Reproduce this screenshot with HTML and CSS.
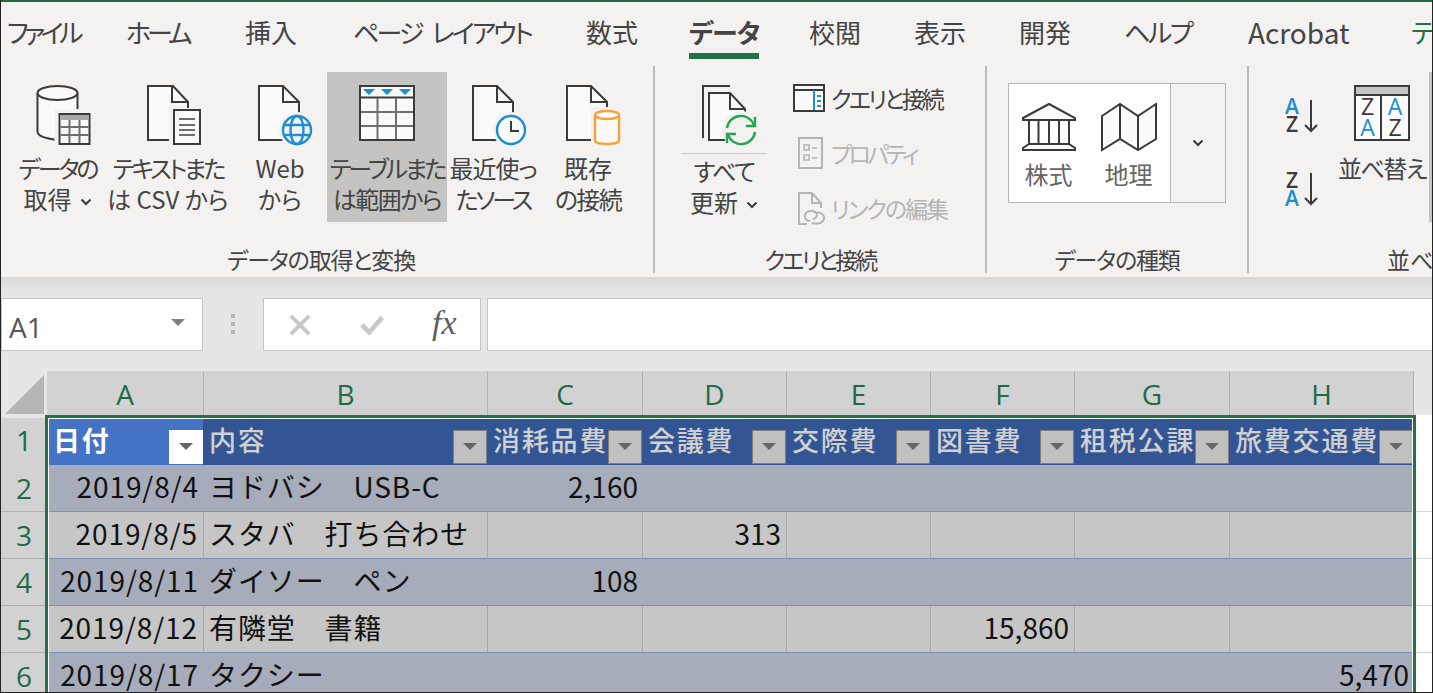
FILE: index.html
```html
<!DOCTYPE html>
<html lang="ja">
<head>
<meta charset="utf-8">
<title>Excel データ</title>
<link rel="stylesheet" href="styles.css">
</head>
<body>
<div class="app">
  <header class="ribbon">
    <nav class="tabs">
      <span class="tab t1">ファイル</span>
      <span class="tab t2">ホーム</span>
      <span class="tab t3">挿入</span>
      <span class="tab t4">ページ レイアウト</span>
      <span class="tab t5">数式</span>
      <span class="tab t6 active">データ</span>
      <span class="tab t7">校閲</span>
      <span class="tab t8">表示</span>
      <span class="tab t9">開発</span>
      <span class="tab t10">ヘルプ</span>
      <span class="tab t11">Acrobat</span>
      <span class="tab t12 context">テーブル デザイン</span>
    </nav>
    <div class="groups">
      <section class="group g1">
        <div class="group-body">
          <div class="big b1">
            <svg class="icon" viewBox="17.5 80 80 70"><g fill="#fafafa" stroke="#3b3a39" stroke-width="2"><path d="M37 93V132Q38 138 58 140H77V93"/><ellipse cx="57" cy="93" rx="20" ry="7"/></g><rect x="54" y="109" width="40" height="38" fill="#f3f2f1"/><rect x="59" y="114" width="30" height="30" fill="#fafafa" stroke="#3b3a39" stroke-width="2"/><rect x="60" y="115" width="28" height="5" fill="#a9a9a9"/><path d="M60 127H88M60 135H88M69 120V143M79 120V143" stroke="#6e6e6e" stroke-width="2" fill="none"/></svg>
            <div class="big-label"><span class="k3">データの</span><br>取得<svg class="chev" viewBox="0 0 12 8"><path d="M1.5 1.5L6 6L10.5 1.5"/></svg></div>
          </div>
          <div class="big b2">
            <svg class="icon" viewBox="128 80 80 70"><path d="M173 86H148V140H188V102Z" fill="#fafafa" stroke="#3b3a39" stroke-width="2"/><path d="M172 86V102H188" fill="none" stroke="#3b3a39" stroke-width="2"/><rect x="169" y="105" width="35" height="40" fill="#f3f2f1"/><path d="M188 102V108" stroke="#3b3a39" stroke-width="2"/><rect x="174" y="110" width="26" height="34" fill="#fafafa" stroke="#3b3a39" stroke-width="2"/><path d="M179 119H195M179 125H195M179 130H195M179 135H195" stroke="#6e6e6e" stroke-width="2"/></svg>
            <div class="big-label"><span class="k3">テキストまた</span><br>は CSV から</div>
          </div>
          <div class="big b3">
            <svg class="icon" viewBox="240 80 80 70"><path d="M283 86H259V140H299V102Z" fill="#fafafa" stroke="#3b3a39" stroke-width="2"/><path d="M283 86V102H299" fill="none" stroke="#3b3a39" stroke-width="2"/><circle cx="297" cy="130" r="18" fill="#f3f2f1"/><g fill="none" stroke="#1e8ed2" stroke-width="2.4"><circle cx="297" cy="130" r="14"/><ellipse cx="297" cy="130" rx="6.5" ry="14"/><path d="M284 125H310M284 135H310"/></g></svg>
            <div class="big-label">Web<br>から</div>
          </div>
          <div class="big b4 selected">
            <svg class="icon" viewBox="347 80 80 70"><rect x="360" y="86" width="54" height="54" fill="#fafafa" stroke="#3b3a39" stroke-width="2"/><path d="M361 97.500H413" stroke="#3b3a39" stroke-width="2"/><path d="M377.500 98V139M396 98V139M361 112H413M361 126H413" stroke="#6e6e6e" stroke-width="2"/><path d="M363 89H375L369 95ZM381 89H393L387 95ZM399 89H411L405 95Z" fill="#1e8ed2"/></svg>
            <div class="big-label"><span class="k3">テーブルまた</span><br><span class="k2">は範囲から</span></div>
          </div>
          <div class="big b5">
            <svg class="icon" viewBox="453 80 80 70"><path d="M497 86H473V140H513V102Z" fill="#fafafa" stroke="#3b3a39" stroke-width="2"/><path d="M497 86V102H513" fill="none" stroke="#3b3a39" stroke-width="2"/><circle cx="511" cy="130" r="18" fill="#f3f2f1"/><circle cx="511" cy="130" r="14" fill="#fafafa" stroke="#1e8ed2" stroke-width="2.400"/><path d="M511 121V131H519" fill="none" stroke="#3b3a39" stroke-width="2"/></svg>
            <div class="big-label"><span class="k1">最近使っ</span><br><span class="k3">たソース</span></div>
          </div>
          <div class="big b6">
            <svg class="icon" viewBox="548 80 80 70"><path d="M591 86H567V140H607V102Z" fill="#fafafa" stroke="#3b3a39" stroke-width="2"/><path d="M591 86V102H607" fill="none" stroke="#3b3a39" stroke-width="2"/><rect x="591" y="107" width="33" height="40" fill="#f3f2f1"/><g fill="#fafafa" stroke="#f7a13e" stroke-width="2.400"><path d="M595 115V140Q595 144 607 144Q619 144 619 140V115"/><ellipse cx="607" cy="115" rx="12" ry="4"/></g></svg>
            <div class="big-label">既存<br><span class="k2">の接続</span></div>
          </div>
        </div>
        <div class="group-label l1">データの取得と変換</div>
      </section>
      <section class="group g2">
        <div class="group-body">
          <div class="refresh">
            <svg class="icon" viewBox="685 80 80 70"><path d="M731 86H704V138" fill="none" stroke="#3b3a39" stroke-width="2"/><path d="M731 93H710V140H746V109Z" fill="#fafafa" stroke="#3b3a39" stroke-width="2"/><path d="M731 93V109H746" fill="none" stroke="#3b3a39" stroke-width="2"/><circle cx="742" cy="130" r="19" fill="#f3f2f1"/><g fill="none" stroke="#21a853" stroke-width="2.400"><path d="M728 128A14 14 0 0 1 755 125"/><path d="M756 132A14 14 0 0 1 729 135"/><path d="M756 117V126H747M728 143V134H737"/></g></svg>
            <div class="refresh-label"><span class="k2">すべて</span><br>更新<svg class="chev" viewBox="0 0 12 8"><path d="M1.5 1.5L6 6L10.5 1.5"/></svg></div>
          </div>
          <div class="small-list">
            <div class="small s1">
              <svg class="small-icon" viewBox="791 82 36 34"><rect x="793" y="86" width="30" height="26" fill="#fafafa" stroke="#3b3a39" stroke-width="2"/><path d="M794 91H822" stroke="#3b3a39" stroke-width="2"/><path d="M813 91V111" stroke="#1e8ed2" stroke-width="2"/><path d="M816 97H820M816 102H820M816 107H820" stroke="#1e8ed2" stroke-width="2"/></svg>
              <span>クエリと接続</span>
            </div>
            <div class="small s2 disabled">
              <svg class="small-icon" viewBox="791 137 36 34"><rect x="798" y="139" width="23" height="30" fill="none" stroke="#b4b4b4" stroke-width="2"/><path d="M803 146h5v5h-5zM803 156h5v5h-5zM811 149h5M811 159h5" fill="none" stroke="#b4b4b4" stroke-width="1.600"/></svg>
              <span>プロパティ</span>
            </div>
            <div class="small s3 disabled">
              <svg class="small-icon" viewBox="791 192 36 34"><path d="M811 194H798V225H806M811 194L820 204V209M811 194V204H820" fill="none" stroke="#b4b4b4" stroke-width="2"/><path d="M809 222C802 222 802 212 810 212C817 212 818 219 812 220M815 214C821 212 825 218 822 222C820 225 814 225 811 224" fill="none" stroke="#b4b4b4" stroke-width="2"/></svg>
              <span>リンクの編集</span>
            </div>
          </div>
        </div>
        <div class="group-label l2">クエリと接続</div>
      </section>
      <section class="group g3">
        <div class="group-body">
          <div class="gallery">
            <div class="gallery-items">
              <div class="gitem i1">
                <svg class="gicon" viewBox="1018 100 60 52"><path d="M1022 118L1048 104L1074 118V120H1022Z" fill="#fafafa" stroke="#3b3a39" stroke-width="2"/><path d="M1028 120V144M1037.500 120V144M1048 120V144M1058 120V144M1068 120V144" stroke="#3b3a39" stroke-width="2"/><path d="M1022 150V148L1028 144H1068L1074 148V150Z" fill="#fafafa" stroke="#3b3a39" stroke-width="2"/></svg>
                <span>株式</span>
              </div>
              <div class="gitem i2">
                <svg class="gicon" viewBox="1099 100 60 52"><path d="M1102 116L1120 104L1138 116L1156 104V139L1138 150L1120 139L1102 150Z" fill="#fafafa" stroke="#3b3a39" stroke-width="2"/><path d="M1120 104V139M1138 116V150" stroke="#3b3a39" stroke-width="2"/></svg>
                <span>地理</span>
              </div>
            </div>
            <div class="gallery-more"><svg class="chev" viewBox="0 0 12 8"><path d="M1.5 1.5L6 6L10.5 1.5"/></svg></div>
          </div>
        </div>
        <div class="group-label l3">データの種類</div>
      </section>
      <section class="group g4">
        <div class="group-body">
          <div class="sort-pair">
            <svg class="sort-icon" viewBox="1282 98 40 40"><text x="1292" y="116" class="sl blue" text-anchor="middle">A</text><text x="1292" y="134" class="sl" text-anchor="middle">Z</text><path d="M1311 102V133M1305 127L1311 133L1317 127" fill="none" stroke="#3b3a39" stroke-width="2"/></svg>
            <svg class="sort-icon" viewBox="1282 172 40 40"><text x="1292" y="190" class="sl" text-anchor="middle">Z</text><text x="1292" y="208" class="sl blue" text-anchor="middle">A</text><path d="M1311 175V206M1305 200L1311 206L1317 200" fill="none" stroke="#3b3a39" stroke-width="2"/></svg>
          </div>
          <div class="sort-big">
            <svg class="icon" viewBox="1342 80 80 70"><rect x="1355" y="86" width="54" height="54" fill="#fafafa" stroke="#3b3a39" stroke-width="2"/><rect x="1356" y="87" width="52" height="7" fill="#c5c4c2"/><path d="M1356 95H1408M1381 95V139" stroke="#3b3a39" stroke-width="2"/><text x="1367.500" y="115" class="sb" text-anchor="middle">Z</text><text x="1367.500" y="136" class="sb blue" text-anchor="middle">A</text><text x="1395" y="115" class="sb blue" text-anchor="middle">A</text><text x="1395" y="136" class="sb" text-anchor="middle">Z</text></svg>
            <div class="big-label"><span class="k2">並べ替え</span></div>
          </div>
        </div>
        <div class="group-label">並べ替えとフィルター</div>
      </section>
      <div class="next-selected"></div>
    </div>
  </header>
  <div class="ribbon-shadow"></div>

  <div class="formula-bar">
    <div class="name-box"><span>A1</span><i class="caret"></i></div>
    <svg class="grip" viewBox="0 0 6 20"><path d="M1 0h4v4h-4zM1 8h4v4h-4zM1 16h4v4h-4z"/></svg>
    <div class="fx-box">
      <svg class="fx-mark" viewBox="0 0 24 24"><path d="M2 2L22 22M22 2L2 22"/></svg>
      <svg class="fx-mark check" viewBox="0 0 26 22"><path d="M2 11L10 19L24 3"/></svg>
      <span class="fx">fx</span>
    </div>
    <div class="formula-input"></div>
  </div>

  <main class="sheet">
    <div class="row head">
      <div class="corner"><i></i></div>
      <div class="ch">A</div><div class="ch">B</div><div class="ch">C</div><div class="ch">D</div><div class="ch">E</div><div class="ch">F</div><div class="ch">G</div><div class="ch">H</div>
      <div class="rest-head"></div>
    </div>
    <div class="row r1">
      <div class="rh">1</div>
      <div class="th first"><span>日付</span><i class="filter"></i></div>
      <div class="th"><span>内容</span><i class="filter"></i></div>
      <div class="th"><span>消耗品費</span><i class="filter"></i></div>
      <div class="th"><span>会議費</span><i class="filter"></i></div>
      <div class="th"><span>交際費</span><i class="filter"></i></div>
      <div class="th"><span>図書費</span><i class="filter"></i></div>
      <div class="th"><span>租税公課</span><i class="filter"></i></div>
      <div class="th"><span>旅費交通費</span><i class="filter"></i></div>
      <div class="rest"></div>
    </div>
    <div class="row band">
      <div class="rh">2</div>
      <div class="td date">2019/8/4</div><div class="td">ヨドバシ　USB-C</div><div class="td num">2,160</div><div class="td"></div><div class="td"></div><div class="td"></div><div class="td"></div><div class="td"></div>
      <div class="rest"></div>
    </div>
    <div class="row plain">
      <div class="rh">3</div>
      <div class="td date">2019/8/5</div><div class="td">スタバ　打ち合わせ</div><div class="td"></div><div class="td num">313</div><div class="td"></div><div class="td"></div><div class="td"></div><div class="td"></div>
      <div class="rest"></div>
    </div>
    <div class="row band">
      <div class="rh">4</div>
      <div class="td date">2019/8/11</div><div class="td">ダイソー　ペン</div><div class="td num">108</div><div class="td"></div><div class="td"></div><div class="td"></div><div class="td"></div><div class="td"></div>
      <div class="rest"></div>
    </div>
    <div class="row plain">
      <div class="rh">5</div>
      <div class="td date">2019/8/12</div><div class="td">有隣堂　書籍</div><div class="td"></div><div class="td"></div><div class="td"></div><div class="td num">15,860</div><div class="td"></div><div class="td"></div>
      <div class="rest"></div>
    </div>
    <div class="row band">
      <div class="rh">6</div>
      <div class="td date">2019/8/17</div><div class="td">タクシー</div><div class="td"></div><div class="td"></div><div class="td"></div><div class="td"></div><div class="td"></div><div class="td num">5,470</div>
      <div class="rest"></div>
    </div>
    <div class="selection"></div>
  </main>
</div>
</body>
</html>
```

FILE: styles.css
```css
* { box-sizing: border-box; }
html, body { margin: 0; height: 100%; overflow: hidden; }
body { background: #e6e6e6; font-family: "Noto Sans CJK JP", "Noto Sans", sans-serif; color: #3b3a39; }
.app { width: 1433px; height: 693px; border: 1px solid #222; border-top: 0; overflow: hidden; background: #e6e6e6; display: flex; flex-direction: column; }

/* ribbon */
.ribbon { height: 277px; flex: none; background: #f3f2f1; border-top: 2px solid #1d6a45; overflow: hidden; font-feature-settings: "palt"; position: relative; }
.tabs { display: flex; height: 64px; padding-left: 6px; white-space: nowrap; font-size: 26px; color: #444; }
.tab { flex: none; height: 57px; line-height: 60px; }
.t1 { width: 119px; letter-spacing: -4.5px; }
.t2 { width: 119px; letter-spacing: -4px; }
.t3 { width: 108px; }
.t4 { width: 233px; letter-spacing: -2.8px; word-spacing: 7px; }
.t5 { width: 103px; }
.t6 { width: 120px; font-weight: 700; letter-spacing: -1px; position: relative; }
.t6::after { content: ""; position: absolute; left: 0; bottom: 0; width: 70px; height: 6px; background: #217346; }
.t7 { width: 105px; } .t8 { width: 105px; } .t9 { width: 105px; }
.t10 { width: 124px; letter-spacing: -2.4px; }
.t11 { width: 163px; font-size: 28px; }
.context { color: #217346; }

.k1 { letter-spacing: -1px; }
.k2 { letter-spacing: -1.6px; }
.k3 { letter-spacing: -3px; }

.groups { display: flex; height: 211px; position: relative; }
.group { flex: none; display: flex; flex-direction: column; border-right: 2px solid #bdbcbb; height: 207px; }
.g1 { width: 654px; padding-left: 4px; }
.g2 { width: 332px; }
.g3 { width: 262px; }
.g4 { width: 300px; border-right: 0; }
.group-body { flex: 1; display: flex; min-height: 0; }
.group-label { height: 29px; line-height: 31px; font-size: 23px; text-align: center; white-space: nowrap; color: #444; }
.l1 { padding-right: 16px; letter-spacing: -1.2px; }
.l2 { letter-spacing: -2.8px; }
.l3 { letter-spacing: -1.2px; }
.g4 .group-label { text-align: left; padding-left: 138px; }

.big { flex: none; padding-top: 8px; height: 150px; display: flex; flex-direction: column; align-items: center; margin-top: 6px; }
.b1 { width: 105px; } .b2 { width: 116px; } .b3 { width: 94px; margin-left: 7px; } .b4 { width: 120px; } .b5 { width: 92px; } .b6 { width: 98px; }
.selected { background: #c5c4c2; }
.icon { width: 80px; height: 70px; flex: none; display: block; }
.big-label { margin-top: 2px; font-size: 24px; line-height: 31px; text-align: center; white-space: nowrap; color: #444; }
.chev { width: 12px; height: 8px; margin-left: 8px; vertical-align: 3px; }
.chev path { fill: none; stroke: #3b3a39; stroke-width: 2; }

.refresh { width: 136px; margin-left: 1px; margin-top: 14px; display: flex; flex-direction: column; align-items: center; }
.refresh-label { font-size: 24px; line-height: 31px; text-align: center; width: 86px; white-space: nowrap; border-top: 1px solid #c8c8c8; margin-top: 3px; padding-top: 1px; color: #444; }
.small-list { margin-top: 4px; display: flex; flex-direction: column; }
.small { height: 55px; display: flex; align-items: center; font-size: 23px; white-space: nowrap; color: #444; }
.small span { margin-left: 3px; }
.s1 span { letter-spacing: -2.8px; }
.s2 span { letter-spacing: -3.5px; }
.s3 span { letter-spacing: -2px; }
.small-icon { width: 36px; height: 34px; flex: none; }
.disabled { color: #b5b5b5; }

.gallery { margin: 17px 0 0 21px; width: 218px; height: 120px; border: 1px solid #b5b5b5; display: flex; }
.gallery-items { width: 162px; background: #fff; display: flex; border-right: 1px solid #b5b5b5; }
.gitem { display: flex; flex-direction: column; align-items: center; font-size: 24px; color: #666; padding-top: 16px; }
.i1 { width: 79px; } .i2 { width: 81px; }
.gicon { width: 60px; height: 52px; }
.gitem span { line-height: 36px; margin-top: 4px; }
.gallery-more { flex: 1; display: flex; align-items: center; justify-content: center; }
.gallery-more .chev { margin: 0; }

.sort-pair { margin: 30px 0 0 33px; display: flex; flex-direction: column; gap: 34px; }
.sort-icon { width: 40px; height: 40px; display: block; }
.sl { font: 600 21px "Open Sans", sans-serif; fill: #3b3a39; }
.sb { font: 400 23px "Open Sans", sans-serif; fill: #3b3a39; }
.blue { fill: #1e8ed2; }
.sort-big { margin: 14px 0 0 20px; display: flex; flex-direction: column; align-items: center; width: 80px; }
.next-selected { position: absolute; left: 1428px; top: 6px; width: 4px; height: 150px; background: #c5c4c2; }

.ribbon-shadow { height: 14px; flex: none; background: linear-gradient(#d8d8d8, #e6e6e6); }

/* formula bar */
.formula-bar { display: flex; align-items: stretch; height: 53px; flex: none; margin-top: 7px; }
.name-box { width: 202px; background: #fff; border: 1px solid #c6c6c6; display: flex; align-items: center; justify-content: space-between; padding: 0 17px 0 7px; font-size: 28px; color: #555; font-family: "Open Sans", sans-serif; }
.name-box span { padding-top: 4px; }
.caret { width: 0; height: 0; border: 7px solid transparent; border-top-color: #808080; border-bottom: 0; margin-top: -4px; }
.grip { width: 6px; height: 20px; margin: 16px 27px 0 27px; fill: #b5b5b5; }
.fx-box { width: 218px; background: #fff; border: 1px solid #c6c6c6; display: flex; align-items: center; padding-left: 24px; }
.fx-mark { width: 24px; height: 22px; fill: none; stroke: #c8c8c8; stroke-width: 4; margin-right: 48px; }
.check { stroke-width: 5; }
.fx { font: italic 34px "Liberation Serif", serif; color: #5f5f5f; margin-top: -4px; }
.formula-input { flex: 1; margin-left: 6px; background: #fff; border: 1px solid #c6c6c6; border-right: 0; }

/* sheet */
.sheet { margin-top: 20px; position: relative; flex: 1; overflow: hidden; background: #fff; }
.row { display: grid; grid-template-columns: 46px 157px 284px 155px 144px 144px 144px 155px 184px 1fr; font-size: 28px; color: #111; white-space: nowrap; }
.head { height: 44px; background: #d2d2d2; }
.corner { background: #e6e6e6; position: relative; }
.corner i { position: absolute; left: 4px; top: 4px; width: 39px; height: 39px; background: #b5b5b5; clip-path: polygon(100% 0, 100% 100%, 0 100%); }
.ch { border-right: 1px solid #b2b2b2; text-align: center; color: #1f6b47; font-family: "Open Sans", sans-serif; font-size: 28px; line-height: 46px; border-bottom: 1px solid #b2b2b2; }
.rest-head { background: #e6e6e6; border-bottom: 1px solid #c8c8c8; }
.rh { background: #d2d2d2; border-bottom: 1px solid #b2b2b2; color: #1f6b47; text-align: center; font-family: "Open Sans", sans-serif; font-size: 28px; line-height: 46px; }
.r1 { height: 50px; }
.band, .plain { height: 47px; line-height: 43px; }
.rest { background: #fff; border-bottom: 1px solid #d4d4d4; }
.r1 .rh { line-height: 50px; }

.th { background: #335593; color: #d0d0d0; font-weight: 500; font-size: 27px; letter-spacing: 1.8px; display: flex; justify-content: space-between; align-items: flex-start; padding: 0 0 0 5px; border-bottom: 1px solid #7b8fb5; overflow: hidden; line-height: 50px; }
.th.first { background: #4472c4; color: #fff; font-weight: 700; padding-left: 6px; border-right: 1px solid #335593; }
.th span { flex: none; }
.filter { flex: none; width: 34px; height: 34px; margin: 15px 1px 0 0; background: #c0c0c0; border: 1px solid #7f7f7f; position: relative; }
.first .filter { margin-right: 0; background: #fff; border-color: #fff; }
.filter::after { content: ""; position: absolute; left: 9px; top: 12px; border: 7px solid transparent; border-top: 7px solid #666; border-bottom: 0; }

.td { padding: 0 0 0 5px; border-bottom: 1px solid #7b8fb5; letter-spacing: 0.9px; }
.band .td { background: #a6acba; }
.plain .td { background: #c6c6c6; border-right: 1px solid #a8a8a8; }
.td.date { text-align: right; padding: 0 5px 0 0; }
.td.num { text-align: right; padding: 0 5px 0 0; letter-spacing: 0; }

.selection { position: absolute; left: 44px; top: 44px; width: 1371px; height: 400px; border: 3px solid #217346; box-shadow: inset 0 0 0 1px #fff; pointer-events: none; }
```
